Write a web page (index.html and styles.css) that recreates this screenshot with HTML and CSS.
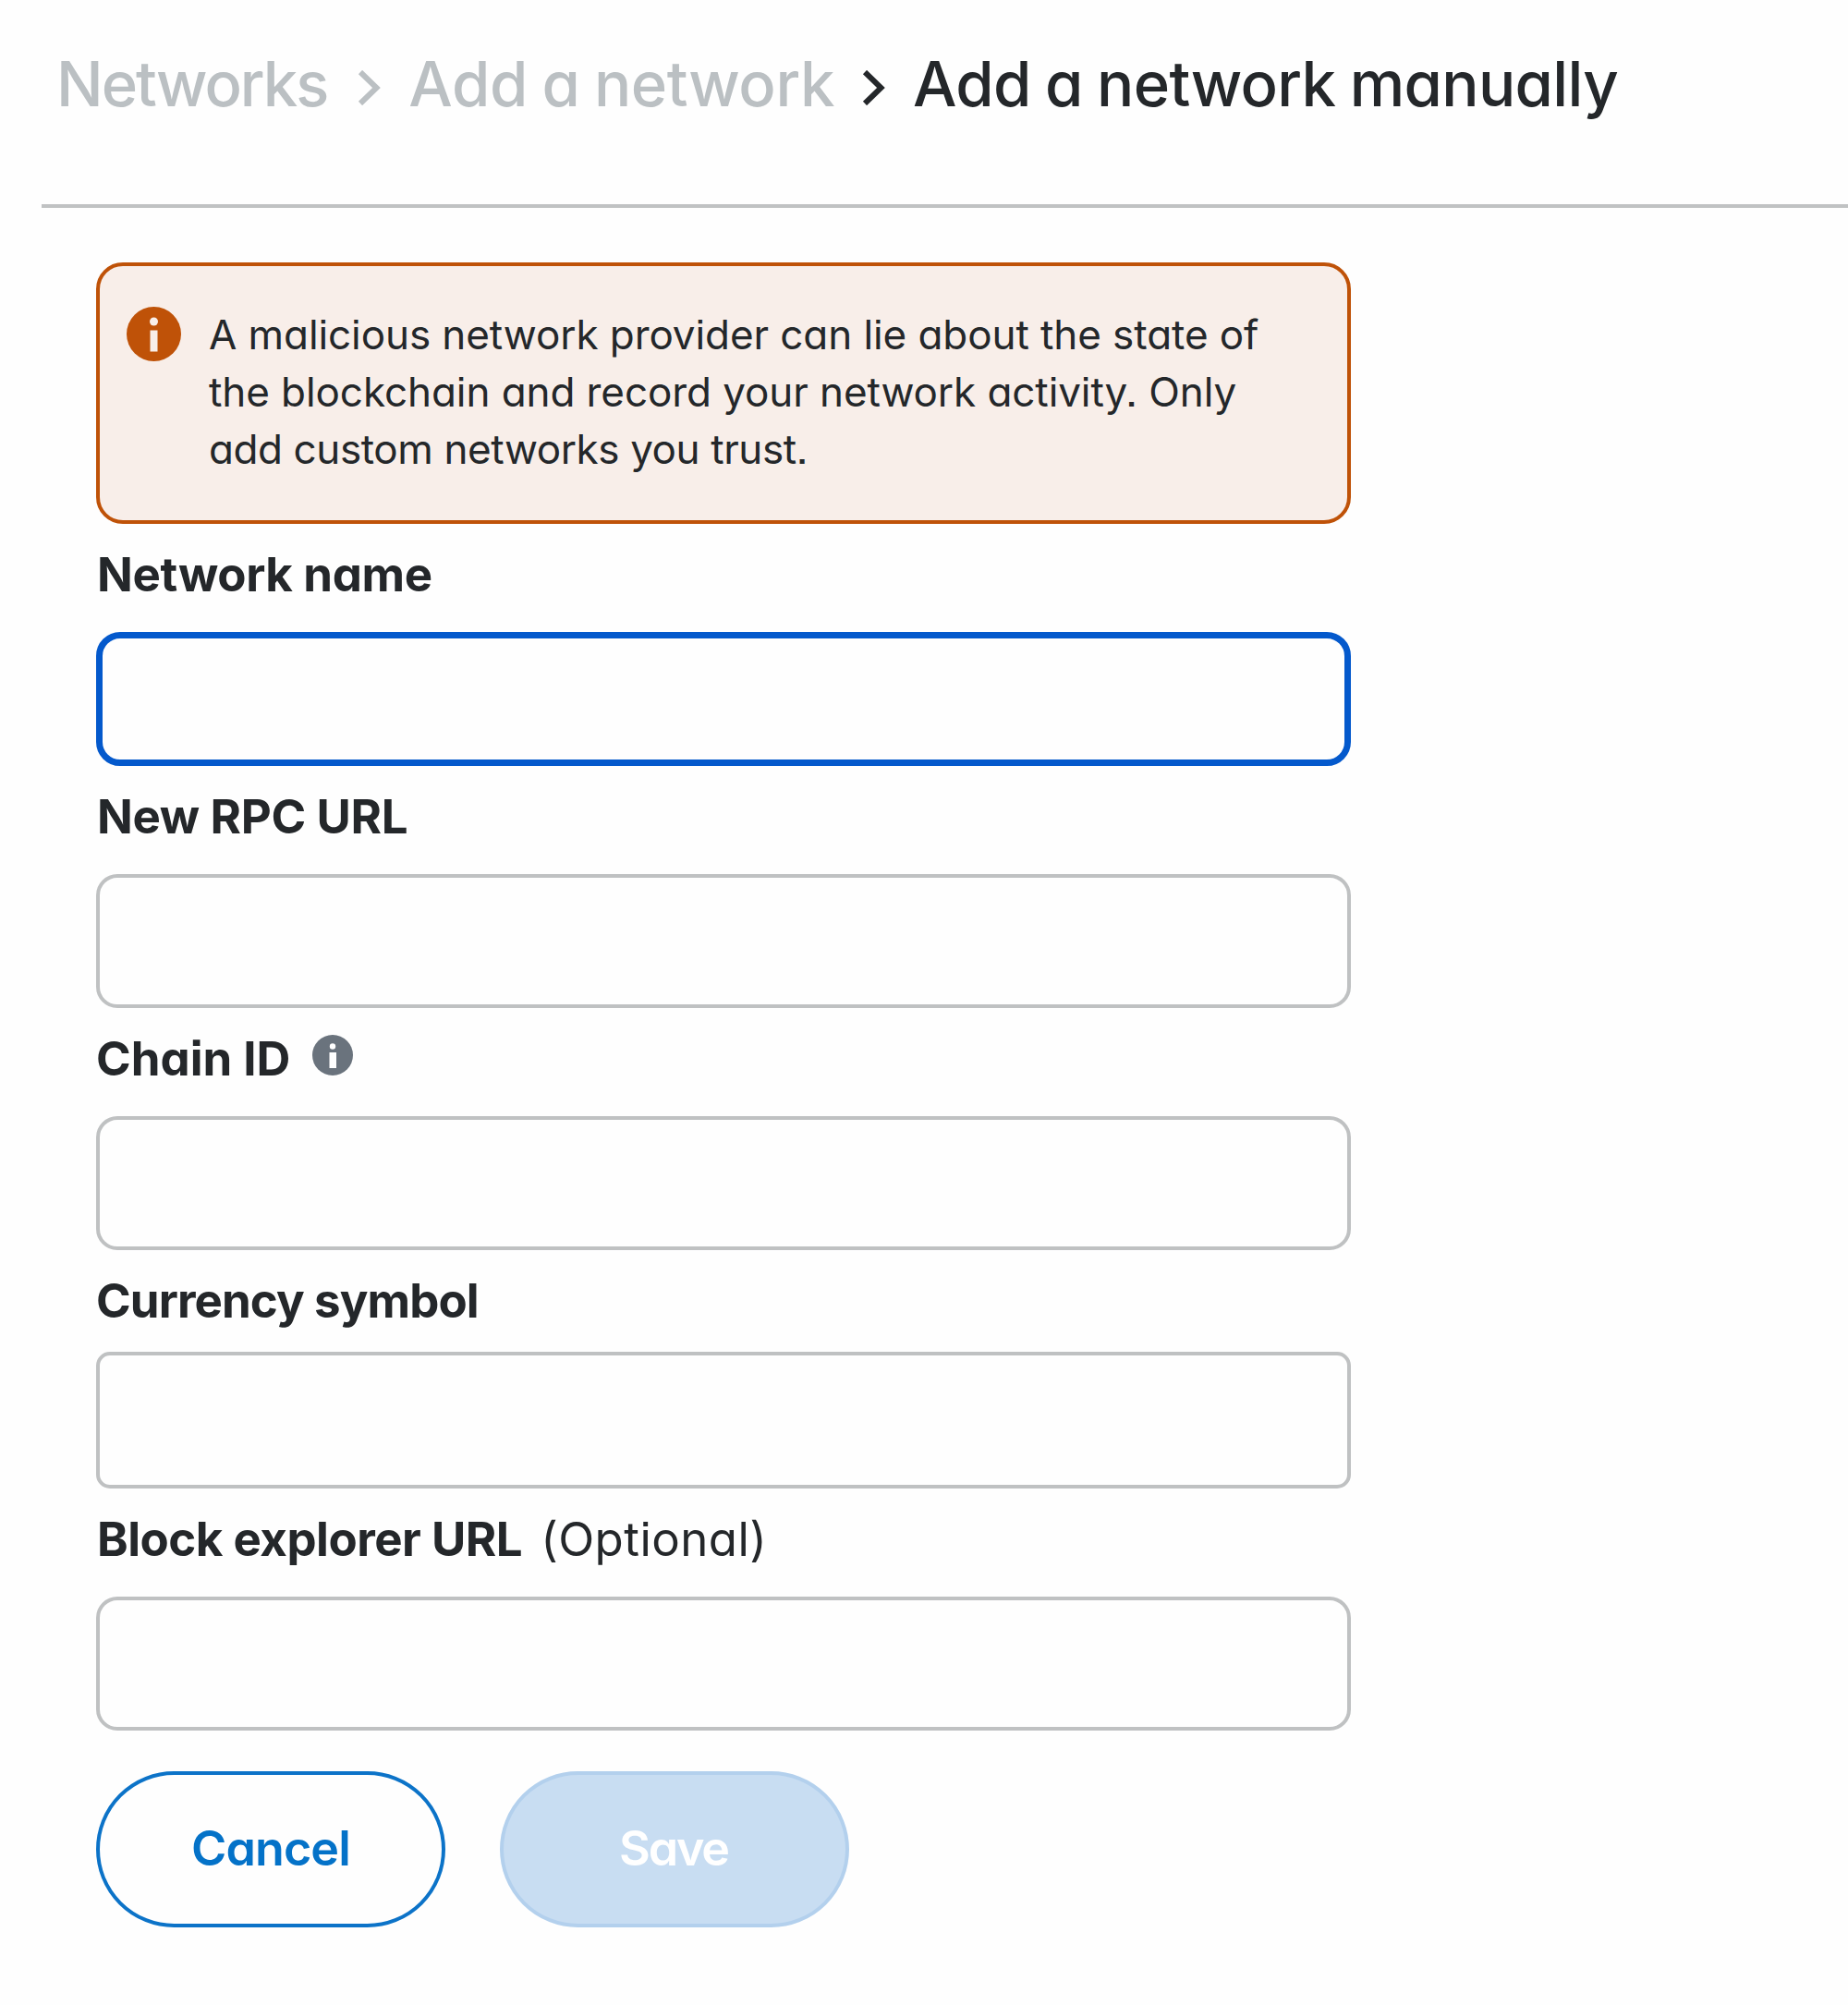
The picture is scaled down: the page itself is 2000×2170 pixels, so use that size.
FILE: index.html
```
<!DOCTYPE html>
<html lang="en">
<head>
<meta charset="utf-8">
<title>Add a network manually</title>
<link rel="stylesheet" href="styles.css">
</head>
<body>
<header class="header">
  <nav class="breadcrumbs">
    <span class="crumb crumb-root">Networks</span>
    <svg class="chevron" viewBox="0 0 26 38"><path d="M3 2 L20.500 19 L3 36"/></svg>
    <span class="crumb">Add a network</span>
    <svg class="chevron chevron-current" viewBox="0 0 26 38"><path d="M3 2 L20.500 19 L3 36"/></svg>
    <span class="crumb crumb-current">Add a network manually</span>
  </nav>
</header>
<main class="form">
  <div class="alert">
    <svg class="alert-icon" viewBox="0 0 60 60"><circle cx="29.500" cy="29.500" r="29.500"/><circle class="mark" cx="29.500" cy="16" r="4.500"/><rect class="mark" x="25.500" y="25.500" width="8" height="23"/></svg>
    <p class="alert-text">A malicious network provider can lie about the state of<br>the blockchain and record your network activity. Only<br><span class="alert-last">add custom networks you trust.</span></p>
  </div>
  <label class="label" for="name">Network name</label>
  <input class="input input-focused" id="name" type="text">
  <label class="label" for="rpc">New RPC URL</label>
  <input class="input" id="rpc" type="text">
  <label class="label label-chain" for="chain">Chain ID
    <svg class="info-icon" viewBox="0 0 44 44"><circle cx="22" cy="22" r="22"/><circle class="mark" cx="22" cy="12.500" r="3.200"/><rect class="mark" x="18.500" y="19" width="7.500" height="17"/></svg>
  </label>
  <input class="input" id="chain" type="text">
  <label class="label label-currency" for="currency">Currency symbol</label>
  <input class="input input-dropdown" id="currency" type="text">
  <label class="label label-explorer" for="explorer">Block explorer URL<span class="optional">(Optional)</span></label>
  <input class="input" id="explorer" type="text">
  <div class="actions">
    <button class="button button-secondary">Cancel</button>
    <button class="button button-primary" disabled>Save</button>
  </div>
</main>
</body>
</html>
```
FILE: styles.css
```
* { box-sizing: border-box; }
body { margin: 0; background: #fefefe; color: #24272a; font-family: Inter, "Liberation Sans", sans-serif; font-feature-settings: "cv11" 1, "ss07" 1; }
.header { height: 225px; margin-left: 45px; border-bottom: 4px solid #c0c2c3; }
.breadcrumbs { display: flex; padding-left: 16px; font-size: 67px; font-weight: 500; line-height: 182px; letter-spacing: -0.4px; word-spacing: -2px; color: #bbc0c3; white-space: nowrap; }
.crumb-root { letter-spacing: -2px; }
.crumb-current { color: #24272a; letter-spacing: -0.65px; }
.chevron { flex: none; width: 26px; height: 38px; margin: 76px 29px 0 33px; fill: none; stroke: #bbc0c3; stroke-width: 6; }
.chevron-current { margin: 76px 29px 0 30px; stroke: #24272a; }
.form { width: 1358px; margin: 59px 0 0 104px; }
.alert { display: flex; height: 283px; padding: 43px 29px; border: 4px solid #bf5208; border-radius: 29px; background: #f8eee9; }
.alert-icon { flex: none; width: 60px; height: 60px; margin: 1px 29px 0 0; fill: #bf5208; }
.alert-icon .mark { fill: #f8eee9; }
.alert-text { margin: 0; font-size: 44px; line-height: 62px; letter-spacing: -0.08px; white-space: nowrap; }
.alert-last { letter-spacing: -0.4px; }
.label { display: flex; height: 117px; padding-left: 1px; font-size: 51px; font-weight: 700; line-height: 109px; letter-spacing: -0.35px; white-space: nowrap; }
.label-chain { padding-left: 0; letter-spacing: 0; }
.label-currency { height: 110px; padding-left: 0; letter-spacing: -0.9px; }
.label-explorer { letter-spacing: -0.5px; }
.info-icon { width: 44px; height: 44px; margin: 29px 0 0 24px; fill: #6a737d; }
.info-icon .mark { fill: #fff; }
.optional { margin-left: 20px; font-weight: 400; letter-spacing: 0.45px; }
.input { display: block; width: 100%; height: 145px; margin: 0; padding: 0 40px; border: 4px solid #bfc1c2; border-radius: 23px; outline: 0; background: #fefefe; font: inherit; font-size: 48px; }
.input-focused { border: 7px solid #0459cc; border-radius: 26px; }
.input-dropdown { height: 148px; border-radius: 15px; }
.actions { display: flex; gap: 59px; margin-top: 44px; }
.button { width: 378px; height: 169px; padding: 0 0 2px; border: 4px solid #0c73c8; border-radius: 85px; background: transparent; color: #0472c8; font: inherit; font-feature-settings: inherit; font-size: 52px; font-weight: 600; letter-spacing: -0.9px; }
.button-primary { padding-right: 2px; border-color: #b3d0ed; background: #c8ddf2; color: #fff; letter-spacing: -2.200px; }
```
